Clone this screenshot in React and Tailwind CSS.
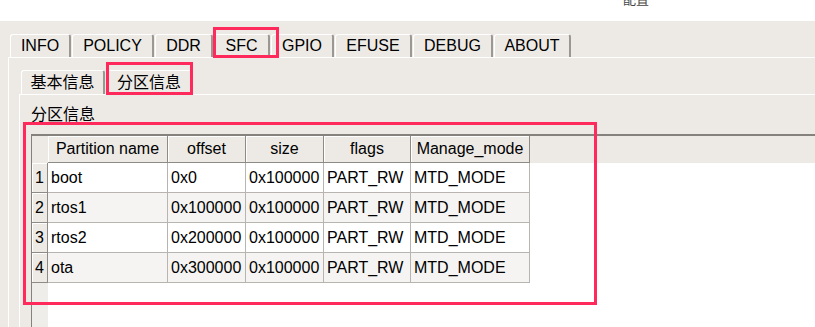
import React from 'react';

const topTabs = [
  { label: 'INFO', w: 'w-[61px]' },
  { label: 'POLICY', w: 'w-[82px]' },
  { label: 'DDR', w: 'w-[58px]' },
  { label: 'SFC', w: 'w-[56px]' },
  { label: 'GPIO', w: 'w-[63px]' },
  { label: 'EFUSE', w: 'w-[77px]' },
  { label: 'DEBUG', w: 'w-[80px]' },
  { label: 'ABOUT', w: 'w-[77px]' },
];

const columns = [
  { label: 'Partition name', w: 'w-[120px]' },
  { label: 'offset', w: 'w-[78px]' },
  { label: 'size', w: 'w-[78px]' },
  { label: 'flags', w: 'w-[87px]' },
  { label: 'Manage_mode', w: 'w-[119px]' },
];

const partitions = [
  ['boot', '0x0', '0x100000', 'PART_RW', 'MTD_MODE'],
  ['rtos1', '0x100000', '0x100000', 'PART_RW', 'MTD_MODE'],
  ['rtos2', '0x200000', '0x100000', 'PART_RW', 'MTD_MODE'],
  ['ota', '0x300000', '0x100000', 'PART_RW', 'MTD_MODE'],
];

function Tab({ label, w }) {
  return (
    <div
      className={`${w} flex h-full items-center justify-center rounded-t-[3px] border-t border-l border-r-2 border-t-white border-l-white border-r-[#9b9894]`}
    >
      {label}
    </div>
  );
}

export default function App() {
  return (
    <div
      className="relative flex h-[327px] w-[815px] flex-col overflow-hidden bg-white text-[16px] text-black"
      style={{ fontFamily: '"Liberation Sans", "Noto Sans CJK SC", sans-serif' }}
    >
      {/* window title, clipped */}
      <div className="h-[21px] shrink-0 overflow-hidden bg-white">
        <div className="-mt-[8px] pl-[623px] text-[13px] leading-[16px] text-[#444]">配置</div>
      </div>

      <div className="flex min-h-0 flex-1 flex-col bg-[#edeae6] pt-[13px]">
        {/* top tabs */}
        <div className="flex h-[23px] shrink-0 gap-[1px] pl-[10px]">
          {topTabs.map((t) => (
            <Tab key={t.label} {...t} />
          ))}
        </div>

        {/* outer pane */}
        <div className="ml-[8px] flex min-h-0 flex-1 flex-col border-t border-l border-white pl-[10px] pt-[12px]">
          <div className="ml-[2px] flex h-[24px] shrink-0 gap-[1px]">
            <Tab label="基本信息" w="w-[84px]" />
            <Tab label="分区信息" w="w-[87px]" />
          </div>

          {/* inner pane */}
          <div className="flex min-h-0 flex-1 flex-col border-t border-l border-white pl-[11px] pt-[10px]">
            <div className="h-[20px] shrink-0 leading-[20px]">分区信息</div>

            {/* table */}
            <div className="mt-[9px] flex min-h-0 flex-1 flex-col border-t-2 border-l border-[#85827e] bg-white">
              <div className="flex h-[27px] shrink-0 bg-[#edeae6]">
                <div className="w-[16px] shrink-0" />
                {columns.map((c) => (
                  <div
                    key={c.label}
                    className={`${c.w} flex shrink-0 items-center justify-center border-r border-b border-[#8e8b87] shadow-[inset_1px_1px_0_#ffffff]`}
                  >
                    {c.label}
                  </div>
                ))}
              </div>

              <div className="flex min-h-0 flex-1">
                <div className="flex w-[16px] shrink-0 flex-col bg-[#efedea]">
                  {partitions.map((_, i) => (
                    <div
                      key={i}
                      className="flex h-[30px] items-center justify-center border-r border-b border-[#8e8b87] bg-[#edeae6] shadow-[inset_1px_1px_0_#ffffff]"
                    >
                      {i + 1}
                    </div>
                  ))}
                </div>
                <div className="flex flex-col">
                  {partitions.map((row, i) => (
                    <div key={i} className={`flex h-[30px] ${i % 2 ? 'bg-[#f5f4f2]' : 'bg-white'}`}>
                      {row.map((v, j) => (
                        <div
                          key={j}
                          className={`${columns[j].w} flex shrink-0 items-center border-r border-b border-[#b8b5b1] pl-[3px]`}
                        >
                          {v}
                        </div>
                      ))}
                    </div>
                  ))}
                </div>
              </div>
            </div>
          </div>
        </div>
      </div>

      {/* annotation boxes */}
      <div className="absolute left-[213px] top-[27px] h-[31px] w-[66px] border-[3px] border-[#ff2a5b]" />
      <div className="absolute left-[106px] top-[62px] h-[33px] w-[87px] border-[3px] border-[#ff2a5b]" />
      <div className="absolute left-[23px] top-[122px] h-[183px] w-[574px] border-[3px] border-[#ff2a5b]" />
    </div>
  );
}
